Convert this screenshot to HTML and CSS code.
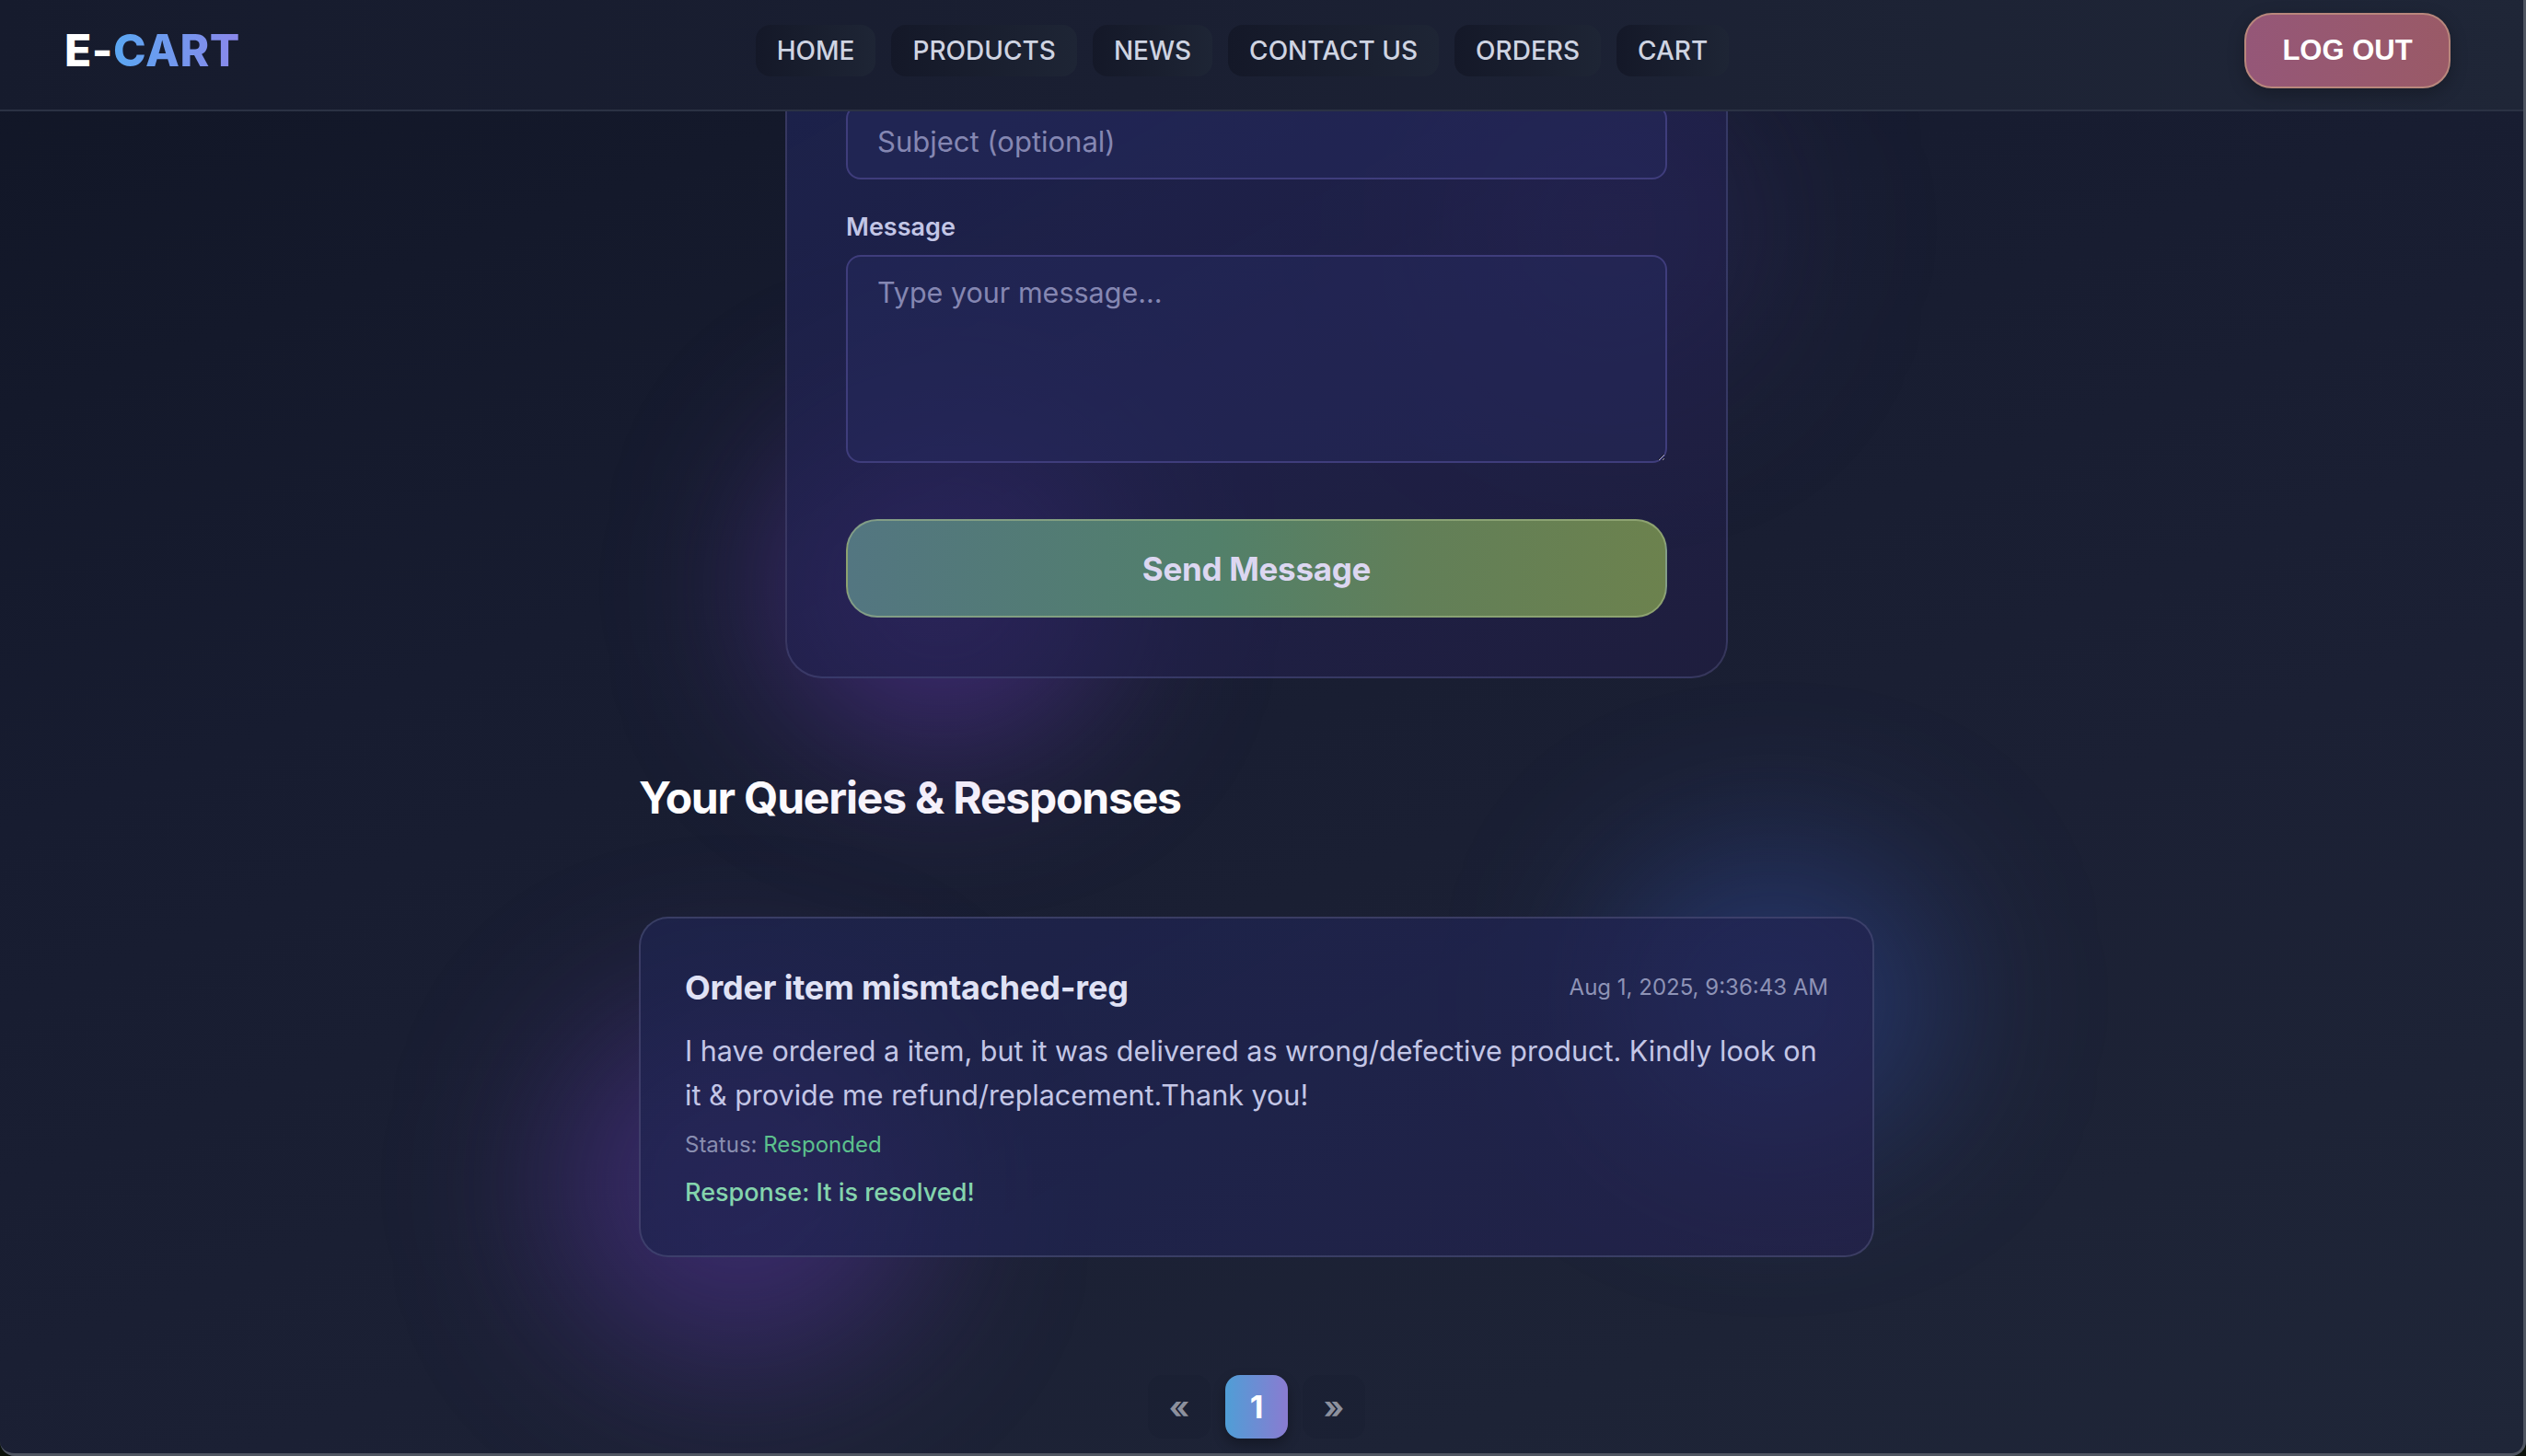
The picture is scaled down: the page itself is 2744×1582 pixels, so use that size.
FILE: index.html
```html
<!DOCTYPE html>
<html lang="en">
<head>
<meta charset="utf-8">
<title>E-CART — Contact Us</title>
<link rel="stylesheet" href="styles.css">
</head>
<body>
<header class="topbar">
  <div class="logo">E-<span class="logo-accent">CART</span></div>
  <nav class="nav">
    <a class="nav-link" href="#">HOME</a>
    <a class="nav-link" href="#">PRODUCTS</a>
    <a class="nav-link" href="#">NEWS</a>
    <a class="nav-link" href="#">CONTACT US</a>
    <a class="nav-link" href="#">ORDERS</a>
    <a class="nav-link" href="#">CART</a>
  </nav>
  <button class="logout" type="button">LOG OUT</button>
</header>

<main class="page">
  <section class="form-wrap">
    <div class="glow glow-form-purple"></div>
    <div class="glow glow-form-blue"></div>
    <form class="contact-card">
      <input class="field" type="text" placeholder="Subject (optional)">
      <label class="field-label">Message</label>
      <textarea class="field field-area" placeholder="Type your message..."></textarea>
      <button class="send-btn" type="button">Send Message</button>
    </form>
  </section>

  <section class="queries">
    <h2 class="queries-title">Your Queries &amp; Responses</h2>
    <div class="query-wrap">
      <div class="glow glow-q-purple"></div>
      <div class="glow glow-q-blue"></div>
      <article class="query-card">
        <div class="query-head">
          <h3 class="query-subject">Order item mismtached-reg</h3>
          <span class="query-date">Aug 1, 2025, 9:36:43 AM</span>
        </div>
        <p class="query-body">I have ordered a item, but it was delivered as wrong/defective product. Kindly look on it &amp; provide me refund/replacement.Thank you!</p>
        <p class="query-status">Status: <span class="status-ok">Responded</span></p>
        <p class="query-response">Response: It is resolved!</p>
      </article>
    </div>
    <div class="pager">
      <button class="pager-btn pager-ghost" type="button">&laquo;</button>
      <button class="pager-btn pager-active" type="button">1</button>
      <button class="pager-btn pager-ghost" type="button">&raquo;</button>
    </div>
  </section>
</main>

<div class="window-frame"></div>
</body>
</html>
```

FILE: styles.css
```css
* { box-sizing: border-box; }

html {
  background: #0b120b;
}

body {
  margin: 0;
  height: 1582px;
  overflow: hidden;
  font-family: "Inter", "Noto Sans", sans-serif;
  color: #e5e7f5;
  background: linear-gradient(160deg, #111626 0%, #171c30 35%, #1b2034 65%, #1f2638 100%);
}

/* ---------- header ---------- */
.topbar {
  position: fixed;
  top: 0;
  left: 0;
  right: 0;
  height: 121px;
  z-index: 20;
  display: flex;
  align-items: center;
  justify-content: space-between;
  padding: 2px 82px 12px 70px;
  background: linear-gradient(100deg, #161b2d 0%, #1a1f32 45%, #1f2637 100%);
  border-bottom: 2px solid #2b3244;
}

.logo {
  font-size: 48px;
  font-weight: 800;
  letter-spacing: 0.6px;
  color: #ffffff;
  line-height: 1;
}

.logo-accent {
  background: linear-gradient(90deg, #5aa7f2, #8b87ea);
  -webkit-background-clip: text;
  background-clip: text;
  color: transparent;
}

.nav {
  display: flex;
  gap: 17px;
}

.nav-link {
  display: block;
  padding: 11px 23px;
  font-size: 28px;
  line-height: 34px;
  font-weight: 500;
  color: #cfd4e2;
  text-decoration: none;
  border-radius: 16px;
  background: linear-gradient(90deg, #141828 0%, #1e2535 100%);
}

.logout {
  width: 224px;
  height: 82px;
  border-radius: 30px;
  border: 2px solid #b8877c;
  background: linear-gradient(90deg, #955778 0%, #9a5a67 100%);
  color: #ffffff;
  font-family: "Liberation Sans", Arial, sans-serif;
  font-weight: 700;
  font-size: 31px;
  box-shadow: 0 6px 18px rgba(0, 0, 0, 0.25);
}

/* ---------- page ---------- */
.page {
  padding: 47px 14px 0 0;
}

.glow {
  position: absolute;
  border-radius: 50%;
  pointer-events: none;
  z-index: 0;
}

.form-wrap {
  position: relative;
  width: 1024px;
  margin: 0 auto;
}

.glow-form-purple {
  left: -10px;
  top: 420px;
  width: 360px;
  height: 340px;
  background: rgba(112, 60, 200, 0.45);
  filter: blur(90px);
}

.glow-form-blue {
  right: -30px;
  top: 40px;
  width: 320px;
  height: 320px;
  background: rgba(80, 60, 170, 0.22);
  filter: blur(100px);
}

.contact-card {
  position: relative;
  z-index: 1;
  display: flex;
  flex-direction: column;
  padding: 64px;
  border-radius: 40px;
  border: 2px solid rgba(120, 120, 170, 0.28);
  background: linear-gradient(150deg, rgba(30, 36, 82, 0.82) 0%, rgba(34, 34, 80, 0.72) 50%, rgba(32, 30, 66, 0.72) 100%);
}

.field {
  display: block;
  width: 100%;
  padding: 16px 32px;
  font-family: "Inter", "Noto Sans", sans-serif;
  font-size: 31px;
  line-height: 46px;
  color: #e2e4f5;
  border: 2px solid #3f3d7c;
  border-radius: 16px;
  background: rgba(38, 42, 96, 0.45);
  outline: none;
}

.field::placeholder {
  color: #8587b2;
}

.field-label {
  margin: 34px 0 12px;
  font-size: 27px;
  line-height: 36px;
  font-weight: 600;
  color: #c3c6e6;
}

.field-area {
  height: 226px;
  font-size: 30.5px;
  resize: vertical;
}

.send-btn {
  margin-top: 61px;
  height: 107px;
  width: 100%;
  border-radius: 34px;
  border: 2px solid rgba(170, 190, 140, 0.55);
  background: linear-gradient(90deg, #537681 0%, #52806a 45%, #627f58 70%, #6c824e 100%);
  color: #dcd7f1;
  font-family: "Inter", "Noto Sans", sans-serif;
  font-size: 35px;
  letter-spacing: -0.3px;
  font-weight: 700;
}

/* ---------- queries ---------- */
.queries {
  width: 1342px;
  margin: 0 auto;
}

.queries-title {
  margin: 101px 0 100px;
  font-size: 48px;
  line-height: 58px;
  font-weight: 700;
  color: #ffffff;
  letter-spacing: -1.2px;
}

.query-wrap {
  position: relative;
}

.glow-q-purple {
  left: -90px;
  bottom: -110px;
  width: 400px;
  height: 380px;
  background: rgba(110, 60, 200, 0.38);
  filter: blur(90px);
}

.glow-q-blue {
  right: -70px;
  top: -70px;
  width: 360px;
  height: 320px;
  background: rgba(60, 100, 220, 0.32);
  filter: blur(90px);
}

.query-card {
  position: relative;
  z-index: 1;
  height: 370px;
  padding: 48px;
  border-radius: 32px;
  border: 2px solid rgba(140, 145, 185, 0.25);
  background: linear-gradient(150deg, rgba(30, 36, 78, 0.78) 0%, rgba(32, 36, 82, 0.72) 50%, rgba(36, 34, 78, 0.72) 100%);
}

.query-head {
  display: flex;
  align-items: center;
  justify-content: space-between;
}

.query-subject {
  margin: 0;
  font-size: 36px;
  line-height: 54px;
  font-weight: 700;
  letter-spacing: -0.2px;
  color: #e0e2f5;
}

.query-date {
  font-size: 24px;
  line-height: 36px;
  color: #8e93b6;
}

.query-body {
  margin: 18px 0 0;
  font-size: 30.5px;
  line-height: 48px;
  color: #c3c6e6;
}

.query-status {
  margin: 13px 0 0;
  font-size: 24px;
  line-height: 34px;
  color: #898eb0;
}

.status-ok {
  color: #5cc08d;
}

.query-response {
  margin: 15px 0 0;
  font-size: 27px;
  line-height: 39px;
  font-weight: 500;
  color: #84d4ad;
}

/* ---------- pager ---------- */
.pager {
  display: flex;
  justify-content: center;
  gap: 16px;
  margin-top: 128px;
}

.pager-btn {
  width: 68px;
  height: 69px;
  border: none;
  border-radius: 16px;
  font-family: "Inter", "Noto Sans", sans-serif;
  font-weight: 700;
  display: flex;
  align-items: center;
  justify-content: center;
}

.pager-ghost {
  background: rgba(20, 24, 38, 0.12);
  color: #8c909d;
  font-size: 34px;
}

.pager-active {
  background: linear-gradient(90deg, #4f9ed6 0%, #8a7bd1 100%);
  color: #ffffff;
  font-size: 34px;
  box-shadow: 0 6px 14px rgba(0, 0, 0, 0.3);
}

/* ---------- screenshot window edge ---------- */
.window-frame {
  position: fixed;
  inset: 0;
  z-index: 50;
  pointer-events: none;
  border-right: 3px solid #4f5561;
  border-bottom: 3px solid #4f5561;
  border-radius: 0 0 16px 16px;
  box-shadow: 0 0 0 40px #0b120b;
}
```
